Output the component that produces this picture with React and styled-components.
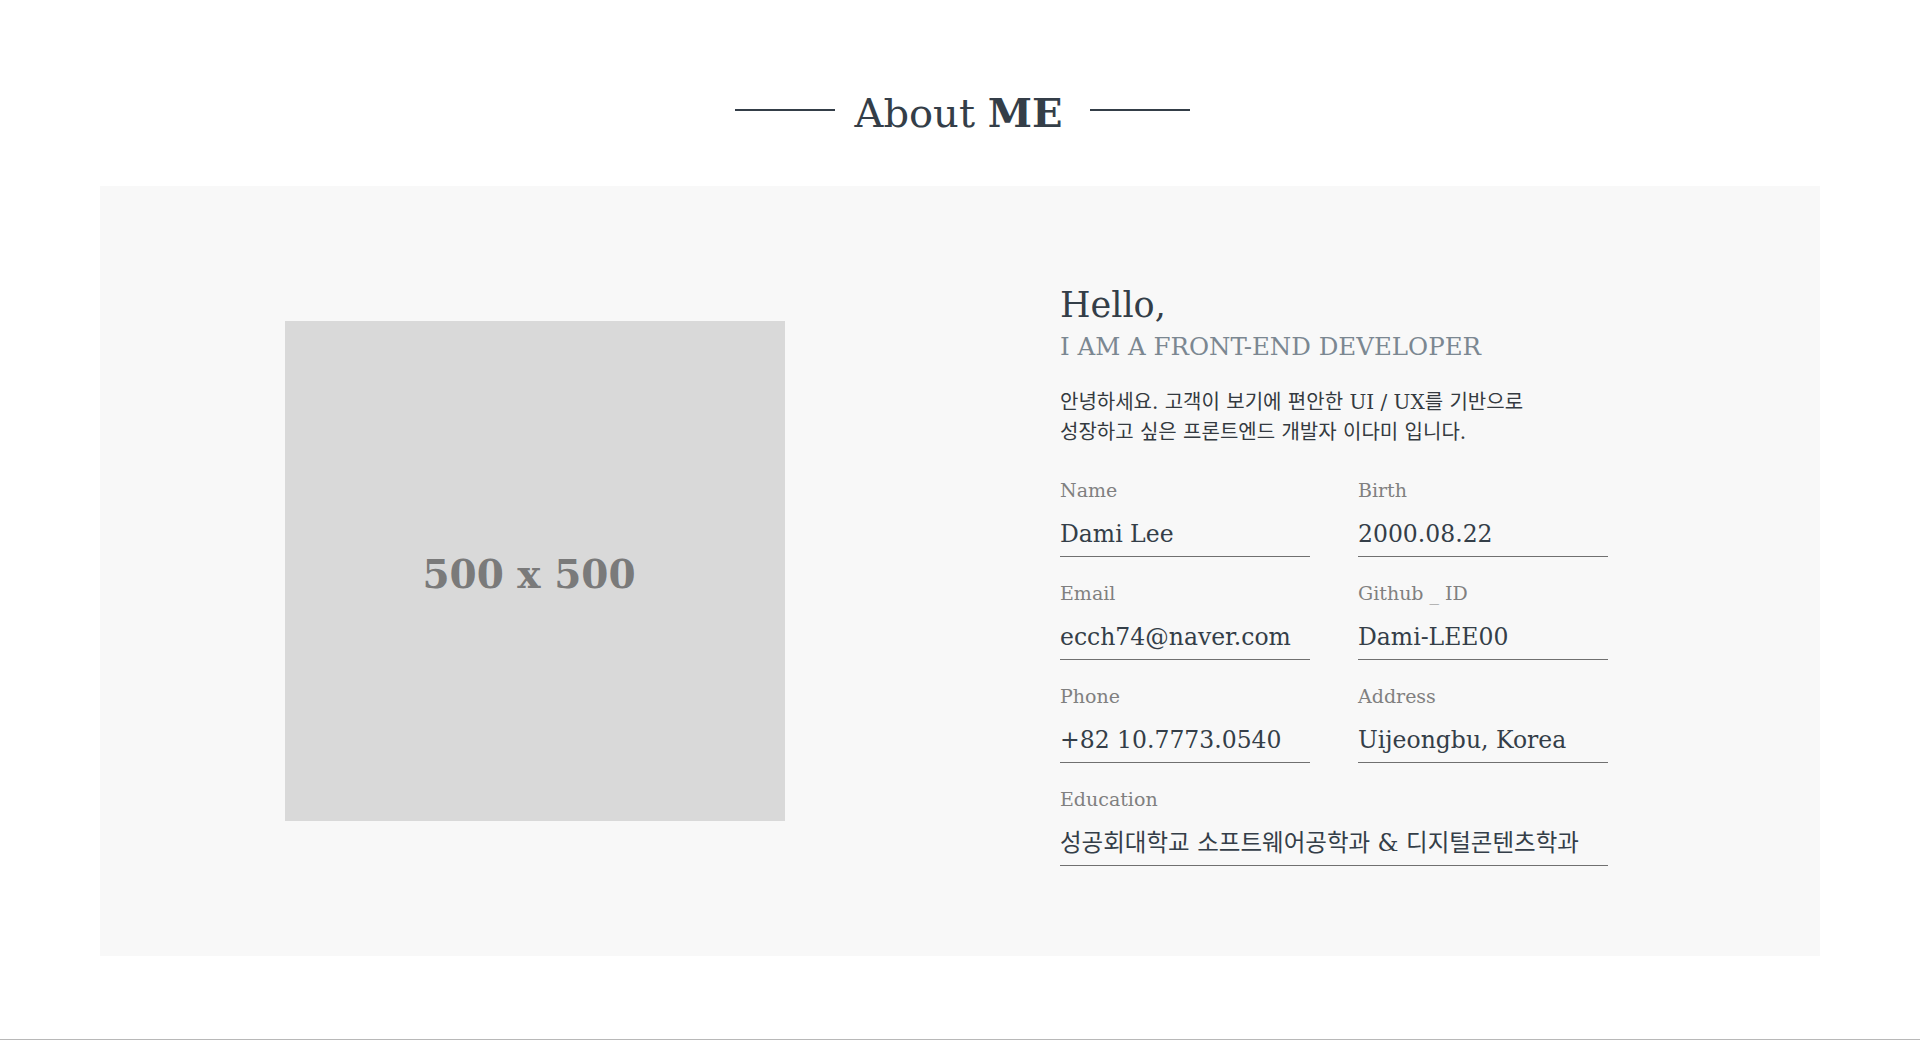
import { createGlobalStyle } from 'styled-components';
import styled from 'styled-components';

const GlobalStyle = createGlobalStyle`
  * {
    box-sizing: border-box;
  }
  body {
    margin: 0;
    background: #ffffff;
    color: #343e48;
    font-family: 'DejaVu Serif', 'Noto Sans CJK KR', serif;
  }
`;

const Section = styled.section`
  padding: 80px 100px 0;
`;

const TitleRow = styled.div`
  display: flex;
  align-items: center;
  justify-content: center;
  gap: 20px;
  height: 60px;
  margin-bottom: 46px;
  padding-left: 5px;
`;

const TitleLine = styled.span`
  width: 100px;
  height: 2px;
  background: #343e48;
`;

const Title = styled.h2`
  margin: 6px 8px 0 0;
  font-size: 40px;
  font-weight: 400;
  line-height: 60px;
  color: #343e48;

  strong {
    font-weight: 700;
  }
`;

const Panel = styled.div`
  display: flex;
  align-items: center;
  gap: 275px;
  height: 770px;
  padding-left: 185px;
  background: #f8f8f8;
`;

const Placeholder = styled.div`
  display: flex;
  align-items: center;
  justify-content: center;
  flex: none;
  width: 500px;
  height: 500px;
  padding: 6px 12px 0 0;
  background: #d9d9d9;
  color: #7a7a7a;
  font-size: 39px;
  font-weight: 700;
`;

const Info = styled.div`
  align-self: flex-start;
  width: 548px;
  margin-top: 97px;
`;

const Hello = styled.h3`
  margin: 0;
  font-size: 35px;
  font-weight: 400;
  line-height: 44px;
  color: #343e48;
`;

const Role = styled.p`
  margin: 5px 0 0;
  font-size: 24.5px;
  line-height: 30px;
  color: #7b8791;
`;

const Intro = styled.p`
  margin: 25px 0 0;
  font-size: 20px;
  line-height: 30px;
  color: #343a40;
`;

const Fields = styled.div`
  display: grid;
  grid-template-columns: 250px 250px;
  column-gap: 48px;
  row-gap: 22px;
  margin-top: 29px;
`;

const Field = styled.div`
  grid-column: ${(p) => (p.$wide ? '1 / -1' : 'auto')};
`;

const Label = styled.div`
  font-size: 19px;
  line-height: 28px;
  color: #808080;
`;

const Value = styled.div`
  margin-top: 14px;
  padding-bottom: 6px;
  border-bottom: 1px solid #707070;
  font-size: 23.5px;
  line-height: 32px;
  color: #343e48;
  white-space: nowrap;
`;

const Divider = styled.div`
  margin-top: 83px;
  height: 1px;
  background: #b8b8b8;
`;

const fields = [
  { label: 'Name', value: 'Dami Lee' },
  { label: 'Birth', value: '2000.08.22' },
  { label: 'Email', value: 'ecch74@naver.com' },
  { label: 'Github _ ID', value: 'Dami-LEE00' },
  { label: 'Phone', value: '+82 10.7773.0540' },
  { label: 'Address', value: 'Uijeongbu, Korea' },
  { label: 'Education', value: '성공회대학교 소프트웨어공학과 & 디지털콘텐츠학과', wide: true },
];

function App() {
  return (
    <>
      <GlobalStyle />
      <Section>
        <TitleRow>
          <TitleLine />
          <Title>
            About <strong>ME</strong>
          </Title>
          <TitleLine />
        </TitleRow>

        <Panel>
          <Placeholder>500 x 500</Placeholder>
          <Info>
            <Hello>Hello,</Hello>
            <Role>I AM A FRONT-END DEVELOPER</Role>
            <Intro>
              안녕하세요. 고객이 보기에 편안한 UI / UX를 기반으로
              <br />
              성장하고 싶은 프론트엔드 개발자 이다미 입니다.
            </Intro>
            <Fields>
              {fields.map((f) => (
                <Field key={f.label} $wide={f.wide}>
                  <Label>{f.label}</Label>
                  <Value>{f.value}</Value>
                </Field>
              ))}
            </Fields>
          </Info>
        </Panel>
      </Section>
      <Divider />
    </>
  );
}

export default App;
